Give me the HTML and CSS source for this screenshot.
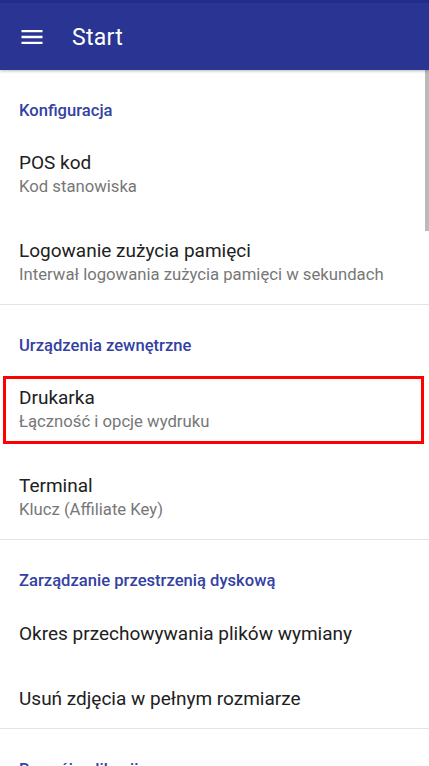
FILE: index.html
```html
<!DOCTYPE html>
<html lang="pl">
<head>
<meta charset="utf-8">
<title>Start</title>
<link rel="stylesheet" href="styles.css">
</head>
<body>
<header class="appbar">
  <svg class="menu-icon" viewBox="0 0 24 24" width="28" height="28" aria-hidden="true">
    <path fill="#fff" d="M3 18h18v-2H3v2zm0-5h18v-2H3v2zm0-7v2h18V6H3z"/>
  </svg>
  <h1 class="appbar-title">Start</h1>
</header>
<main class="prefs">
  <section class="group">
    <h2 class="group-title">Konfiguracja</h2>
    <div class="pref two">
      <div class="pref-title">POS kod</div>
      <div class="pref-summary">Kod stanowiska</div>
    </div>
    <div class="pref two">
      <div class="pref-title">Logowanie zużycia pamięci</div>
      <div class="pref-summary">Interwał logowania zużycia pamięci w sekundach</div>
    </div>
  </section>
  <section class="group">
    <h2 class="group-title">Urządzenia zewnętrzne</h2>
    <div class="pref two highlighted">
      <div class="pref-title">Drukarka</div>
      <div class="pref-summary">Łączność i opcje wydruku</div>
      <span class="highlight-box"></span>
    </div>
    <div class="pref two">
      <div class="pref-title">Terminal</div>
      <div class="pref-summary">Klucz (Affiliate Key)</div>
    </div>
  </section>
  <section class="group">
    <h2 class="group-title">Zarządzanie przestrzenią dyskową</h2>
    <div class="pref one">
      <div class="pref-title">Okres przechowywania plików wymiany</div>
    </div>
    <div class="pref one">
      <div class="pref-title">Usuń zdjęcia w pełnym rozmiarze</div>
    </div>
  </section>
  <section class="group">
    <h2 class="group-title">Rozwój aplikacji</h2>
  </section>
</main>
<div class="scrollbar"></div>
</body>
</html>
```
FILE: styles.css
```css
html, body {
  margin: 0;
  padding: 0;
}
body {
  width: 429px;
  height: 766px;
  overflow: hidden;
  position: relative;
  background: #ffffff;
  font-family: Roboto, "Noto Sans", "Liberation Sans", sans-serif;
}
.appbar {
  position: relative;
  z-index: 2;
  height: 70px;
  box-sizing: border-box;
  border-top: 3px solid #232d87;
  background: #2a3593;
  display: flex;
  align-items: center;
  padding-left: 18px;
  box-shadow: 0 1px 3px rgba(0, 0, 0, 0.28);
}
.menu-icon {
  display: block;
  margin-top: 1px;
}
.appbar-title {
  margin: 0 0 0 26px;
  font-size: 23px;
  font-weight: 400;
  color: #ffffff;
  letter-spacing: 0.3px;
  line-height: 28px;
  padding-top: 3px;
}
.prefs {
  display: flex;
  flex-direction: column;
}
.group + .group {
  border-top: 1px solid #e3e3e3;
}
.group-title {
  margin: 0;
  height: 58px;
  box-sizing: border-box;
  padding: 31px 19px 7px;
  font-size: 16.6px;
  line-height: 20px;
  font-weight: 500;
  color: #3341a3;
}
.pref {
  position: relative;
  display: flex;
  flex-direction: column;
  box-sizing: border-box;
  padding: 0 19px;
}
.pref.two {
  height: 88px;
  padding-top: 24px;
}
.pref.one {
  height: 65px;
  padding-top: 25px;
}
.pref-title {
  font-size: 19px;
  line-height: 22px;
  color: #212121;
}
.pref-summary {
  margin-top: 3px;
  font-size: 16.7px;
  line-height: 20px;
  color: #777777;
}
.highlight-box {
  position: absolute;
  left: 3px;
  top: 13px;
  width: 421px;
  height: 68px;
  box-sizing: border-box;
  border: 3px solid #ff0000;
}
.scrollbar {
  position: absolute;
  right: 0;
  top: 70px;
  width: 4px;
  height: 161px;
  background: #bababa;
}
```
